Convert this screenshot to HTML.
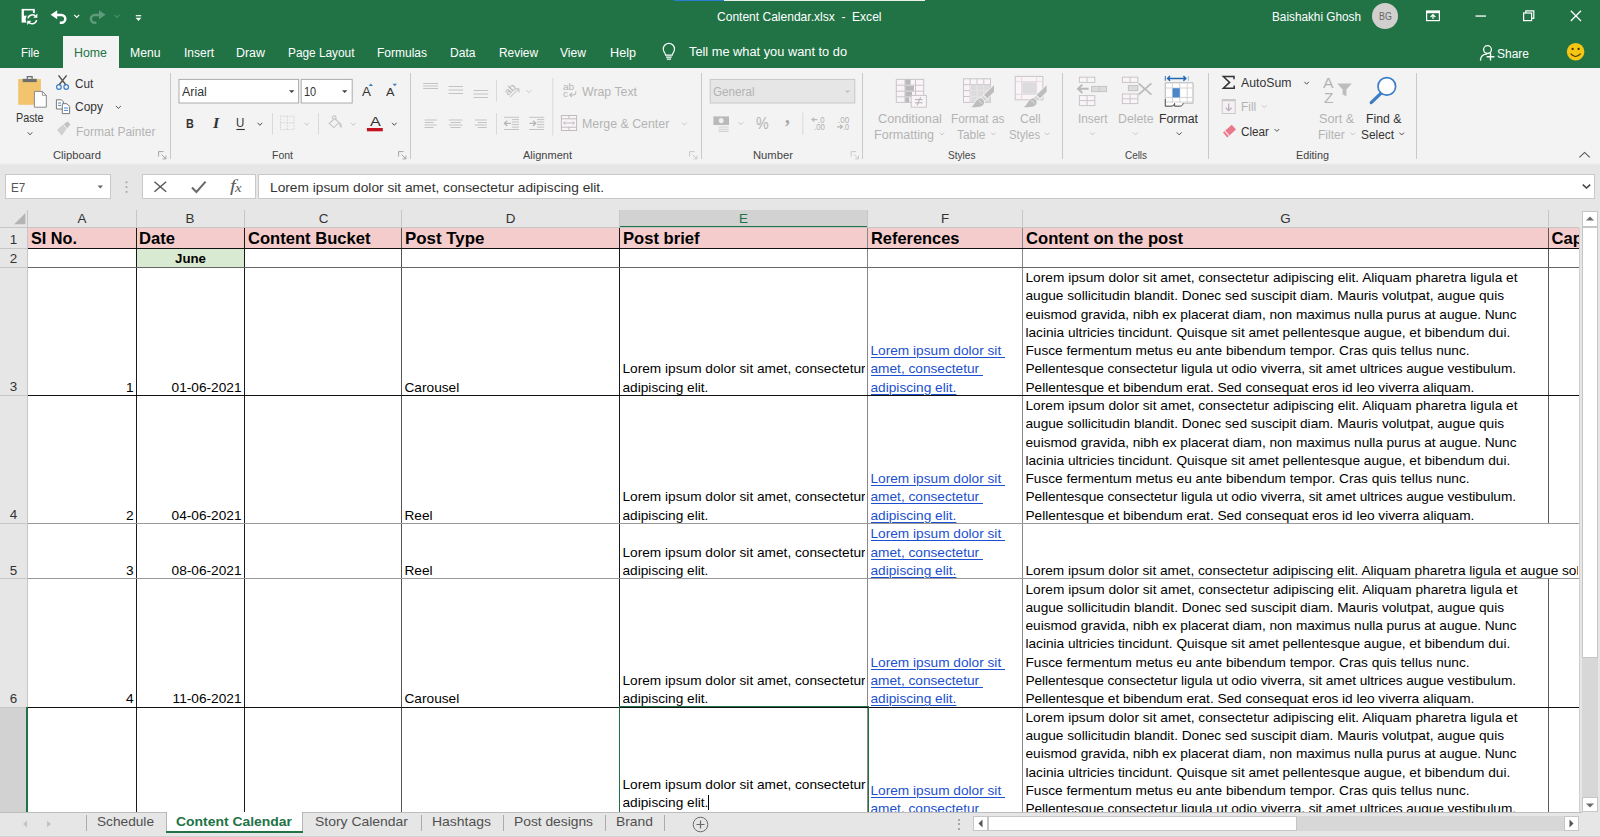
<!DOCTYPE html>
<html lang="en"><head><meta charset="utf-8"><title>Content Calendar.xlsx - Excel</title>
<style>
html,body{margin:0;padding:0}
body{width:1600px;height:837px;overflow:hidden;position:relative;background:#e6e6e6;font-family:'Liberation Sans',sans-serif}
.t{position:absolute;white-space:pre;line-height:1;transform-origin:0 50%;display:block}
.r{position:absolute;box-sizing:border-box}
.c{position:absolute;box-sizing:border-box;font-size:13.68px;line-height:18.25px;color:#000;overflow:hidden;white-space:nowrap}
a{color:#1c50d0;text-decoration:underline;text-underline-offset:2px;text-decoration-thickness:1px}
</style></head>
<body>
<div class="r" style="left:0px;top:0px;width:1600px;height:68px;background:#217346;"></div>
<div class="r" style="left:674px;top:0px;width:50px;height:1px;background:#2b7cd3;"></div>
<div class="r" style="left:724px;top:0px;width:201px;height:1px;background:#e9f1ec;"></div>
<span class="t" style="left:717px;top:11px;font-size:12.8px;color:#fff;font-weight:normal;font-style:normal;transform:scaleX(0.9401);">Content Calendar.xlsx  -  Excel</span>
<span class="t" style="left:1272px;top:11px;font-size:12.5px;color:#fff;font-weight:normal;font-style:normal;transform:scaleX(0.9416);">Baishakhi Ghosh</span>
<div class="r" style="left:1372px;top:3px;width:26px;height:26px;border-radius:50%;background:#d2d0ce"></div>
<span class="t" style="left:1378.7px;top:12px;font-size:10px;color:#666;font-weight:normal;font-style:normal;transform:scaleX(0.8856);">BG</span>
<div class="r" style="left:63px;top:36px;width:56px;height:32px;background:#f3f3f3;"></div>
<span class="t" style="left:21px;top:47px;font-size:12.5px;color:#fff;font-weight:normal;font-style:normal;transform:scaleX(0.9178);">File</span>
<span class="t" style="left:74px;top:47px;font-size:12.5px;color:#217346;font-weight:normal;font-style:normal;transform:scaleX(0.9897);">Home</span>
<span class="t" style="left:130px;top:47px;font-size:12.5px;color:#fff;font-weight:normal;font-style:normal;transform:scaleX(0.975);">Menu</span>
<span class="t" style="left:183.5px;top:47px;font-size:12.5px;color:#fff;font-weight:normal;font-style:normal;transform:scaleX(0.9595);">Insert</span>
<span class="t" style="left:236px;top:47px;font-size:12.5px;color:#fff;font-weight:normal;font-style:normal;transform:scaleX(0.9941);">Draw</span>
<span class="t" style="left:287.5px;top:47px;font-size:12.5px;color:#fff;font-weight:normal;font-style:normal;transform:scaleX(0.9473);">Page Layout</span>
<span class="t" style="left:376.5px;top:47px;font-size:12.5px;color:#fff;font-weight:normal;font-style:normal;transform:scaleX(0.9598);">Formulas</span>
<span class="t" style="left:449.5px;top:47px;font-size:12.5px;color:#fff;font-weight:normal;font-style:normal;transform:scaleX(0.9657);">Data</span>
<span class="t" style="left:498.5px;top:47px;font-size:12.5px;color:#fff;font-weight:normal;font-style:normal;transform:scaleX(0.9512);">Review</span>
<span class="t" style="left:560px;top:47px;font-size:12.5px;color:#fff;font-weight:normal;font-style:normal;transform:scaleX(0.9674);">View</span>
<span class="t" style="left:609.5px;top:47px;font-size:12.5px;color:#fff;font-weight:normal;font-style:normal;transform:scaleX(1.0109);">Help</span>
<span class="t" style="left:689px;top:46px;font-size:12.5px;color:#fff;font-weight:normal;font-style:normal;transform:scaleX(1.0243);">Tell me what you want to do</span>
<span class="t" style="left:1497px;top:48px;font-size:12.5px;color:#fff;font-weight:normal;font-style:normal;transform:scaleX(0.9593);">Share</span>
<div class="r" style="left:0px;top:68px;width:1600px;height:95px;background:#f3f3f3;"></div>
<div class="r" style="left:0px;top:162.7px;width:1600px;height:2px;background:linear-gradient(#f3f3f3,#e6e6e6);"></div>
<div class="r" style="left:170.1px;top:73px;width:1px;height:86px;background:#c9c9c9;"></div>
<div class="r" style="left:410.1px;top:73px;width:1px;height:86px;background:#c9c9c9;"></div>
<div class="r" style="left:701px;top:73px;width:1px;height:86px;background:#c9c9c9;"></div>
<div class="r" style="left:862.3px;top:73px;width:1px;height:86px;background:#c9c9c9;"></div>
<div class="r" style="left:1061.7px;top:73px;width:1px;height:86px;background:#c9c9c9;"></div>
<div class="r" style="left:1208px;top:73px;width:1px;height:86px;background:#c9c9c9;"></div>
<div class="r" style="left:1416.3px;top:73px;width:1px;height:86px;background:#c9c9c9;"></div>
<span class="t" style="left:52.5px;top:150px;font-size:11.5px;color:#444;font-weight:normal;font-style:normal;transform:scaleX(0.9749);">Clipboard</span>
<span class="t" style="left:271.5px;top:150px;font-size:11.5px;color:#444;font-weight:normal;font-style:normal;transform:scaleX(0.9124);">Font</span>
<span class="t" style="left:523px;top:150px;font-size:11.5px;color:#444;font-weight:normal;font-style:normal;transform:scaleX(0.9581);">Alignment</span>
<span class="t" style="left:753px;top:150px;font-size:11.5px;color:#444;font-weight:normal;font-style:normal;transform:scaleX(0.9778);">Number</span>
<span class="t" style="left:948px;top:150px;font-size:11.5px;color:#444;font-weight:normal;font-style:normal;transform:scaleX(0.8778);">Styles</span>
<span class="t" style="left:1124.5px;top:150px;font-size:11.5px;color:#444;font-weight:normal;font-style:normal;transform:scaleX(0.8606);">Cells</span>
<span class="t" style="left:1296px;top:150px;font-size:11.5px;color:#444;font-weight:normal;font-style:normal;transform:scaleX(0.9382);">Editing</span>
<div class="r" style="left:5px;top:174px;width:106px;height:25px;background:#fff;border:1px solid #c9c9c9"></div>
<span class="t" style="left:11.2px;top:182px;font-size:12.8px;color:#555;font-weight:normal;font-style:normal;transform:scaleX(0.9134);">E7</span>
<div class="r" style="left:142px;top:174px;width:114px;height:25px;background:#fff;border:1px solid #c9c9c9"></div>
<div class="r" style="left:258px;top:174px;width:1337px;height:25px;background:#fff;border:1px solid #c9c9c9"></div>
<span class="t" style="left:270px;top:181px;font-size:13px;color:#333;font-weight:normal;font-style:normal;transform:scaleX(1.0553);">Lorem ipsum dolor sit amet, consectetur adipiscing elit.</span>
<div class="r" style="left:27.5px;top:227.5px;width:1551.0px;height:584.5px;background:#fff;"></div>
<div class="r" style="left:27.5px;top:227.5px;width:1551.0px;height:20.5px;background:#f4cccc;"></div>
<div class="r" style="left:136.5px;top:248px;width:108px;height:19px;background:#d9ead3;"></div>
<div class="r" style="left:619.5px;top:209.5px;width:248px;height:18px;background:#d2d2d2;"></div>
<div class="r" style="left:619.5px;top:226px;width:248px;height:1.6px;background:#217346;"></div>
<div class="r" style="left:27.0px;top:209.5px;width:1px;height:18px;background:#c6c6c6;"></div>
<div class="r" style="left:136.0px;top:209.5px;width:1px;height:18px;background:#c6c6c6;"></div>
<div class="r" style="left:244.0px;top:209.5px;width:1px;height:18px;background:#c6c6c6;"></div>
<div class="r" style="left:401.0px;top:209.5px;width:1px;height:18px;background:#c6c6c6;"></div>
<div class="r" style="left:619.0px;top:209.5px;width:1px;height:18px;background:#c6c6c6;"></div>
<div class="r" style="left:867.0px;top:209.5px;width:1px;height:18px;background:#c6c6c6;"></div>
<div class="r" style="left:1022.0px;top:209.5px;width:1px;height:18px;background:#c6c6c6;"></div>
<div class="r" style="left:1548.0px;top:209.5px;width:1px;height:18px;background:#c6c6c6;"></div>
<div class="r" style="left:0px;top:227px;width:1578.5px;height:1px;background:#c6c6c6;"></div>
<span class="t" style="left:82px;top:212px;font-size:13.4px;color:#333;font-weight:normal;font-style:normal;transform:scaleX(1);transform:translateX(-50%);">A</span>
<span class="t" style="left:190px;top:212px;font-size:13.4px;color:#333;font-weight:normal;font-style:normal;transform:scaleX(1);transform:translateX(-50%);">B</span>
<span class="t" style="left:323.5px;top:212px;font-size:13.4px;color:#333;font-weight:normal;font-style:normal;transform:scaleX(1);transform:translateX(-50%);">C</span>
<span class="t" style="left:510.5px;top:212px;font-size:13.4px;color:#333;font-weight:normal;font-style:normal;transform:scaleX(1);transform:translateX(-50%);">D</span>
<span class="t" style="left:743.5px;top:212px;font-size:13.4px;color:#217346;font-weight:normal;font-style:normal;transform:scaleX(1);transform:translateX(-50%);">E</span>
<span class="t" style="left:945px;top:212px;font-size:13.4px;color:#333;font-weight:normal;font-style:normal;transform:scaleX(1);transform:translateX(-50%);">F</span>
<span class="t" style="left:1285.5px;top:212px;font-size:13.4px;color:#333;font-weight:normal;font-style:normal;transform:scaleX(1);transform:translateX(-50%);">G</span>
<svg class="r" style="left:13.6px;top:212.6px;" width="12" height="12" viewBox="0 0 12 12"><path d="M11.4 0 V11.2 H0.2 Z" fill="#b4b4b4"/></svg>
<div class="r" style="left:0px;top:707px;width:27.5px;height:105px;background:#d2d2d2;"></div>
<span class="t" style="left:13.6px;top:233px;font-size:13.4px;color:#333;font-weight:normal;font-style:normal;transform:scaleX(1);transform:translateX(-50%);">1</span>
<span class="t" style="left:13.6px;top:252px;font-size:13.4px;color:#333;font-weight:normal;font-style:normal;transform:scaleX(1);transform:translateX(-50%);">2</span>
<span class="t" style="left:13.6px;top:380px;font-size:13.4px;color:#333;font-weight:normal;font-style:normal;transform:scaleX(1);transform:translateX(-50%);">3</span>
<span class="t" style="left:13.6px;top:508px;font-size:13.4px;color:#333;font-weight:normal;font-style:normal;transform:scaleX(1);transform:translateX(-50%);">4</span>
<span class="t" style="left:13.6px;top:564px;font-size:13.4px;color:#333;font-weight:normal;font-style:normal;transform:scaleX(1);transform:translateX(-50%);">5</span>
<span class="t" style="left:13.6px;top:692px;font-size:13.4px;color:#333;font-weight:normal;font-style:normal;transform:scaleX(1);transform:translateX(-50%);">6</span>
<div class="r" style="left:0px;top:247.5px;width:27.5px;height:1px;background:#c6c6c6;"></div>
<div class="r" style="left:0px;top:266.5px;width:27.5px;height:1px;background:#c6c6c6;"></div>
<div class="r" style="left:0px;top:395.0px;width:27.5px;height:1px;background:#c6c6c6;"></div>
<div class="r" style="left:0px;top:523.0px;width:27.5px;height:1px;background:#c6c6c6;"></div>
<div class="r" style="left:0px;top:578.3px;width:27.5px;height:1px;background:#c6c6c6;"></div>
<div class="r" style="left:0px;top:706.5px;width:27.5px;height:1px;background:#c6c6c6;"></div>
<div class="r" style="left:27px;top:227.5px;width:1px;height:584.5px;background:#c6c6c6;"></div>
<div class="r" style="left:26.4px;top:707px;width:1.6px;height:105px;background:#217346;"></div>
<div class="r" style="left:136.0px;top:227.5px;width:1px;height:584.5px;background:#1a1a1a;"></div>
<div class="r" style="left:244.0px;top:227.5px;width:1px;height:584.5px;background:#1a1a1a;"></div>
<div class="r" style="left:401.0px;top:227.5px;width:1px;height:584.5px;background:#555;"></div>
<div class="r" style="left:619.0px;top:227.5px;width:1px;height:584.5px;background:#1a1a1a;"></div>
<div class="r" style="left:867.0px;top:227.5px;width:1px;height:584.5px;background:#888;"></div>
<div class="r" style="left:1022.0px;top:227.5px;width:1px;height:584.5px;background:#888;"></div>
<div class="r" style="left:1548.0px;top:227.5px;width:1px;height:584.5px;background:#5a5a5a;"></div>
<div class="r" style="left:27.5px;top:247.85px;width:1551.0px;height:1.3px;background:#111;"></div>
<div class="r" style="left:27.5px;top:266.5px;width:1551.0px;height:1px;background:#666;"></div>
<div class="r" style="left:27.5px;top:395.0px;width:1551.0px;height:1px;background:#111;"></div>
<div class="r" style="left:27.5px;top:523.0px;width:1551.0px;height:1px;background:#999;"></div>
<div class="r" style="left:27.5px;top:578.3px;width:1551.0px;height:1px;background:#999;"></div>
<div class="r" style="left:27.5px;top:706.5px;width:1551.0px;height:1px;background:#111;"></div>
<div class="r" style="left:1578.5px;top:227.5px;width:1.5px;height:584.5px;background:#cfcfcf;"></div>
<span class="t" style="left:31px;top:231px;font-size:16.6px;color:#000;font-weight:bold;font-style:normal;transform:scaleX(0.9781);">SI No.</span>
<span class="t" style="left:139px;top:231px;font-size:16.6px;color:#000;font-weight:bold;font-style:normal;transform:scaleX(1.0009);">Date</span>
<span class="t" style="left:247.5px;top:231px;font-size:16.6px;color:#000;font-weight:bold;font-style:normal;transform:scaleX(0.999);">Content Bucket</span>
<span class="t" style="left:404.5px;top:231px;font-size:16.6px;color:#000;font-weight:bold;font-style:normal;transform:scaleX(1.0182);">Post Type</span>
<span class="t" style="left:622.5px;top:231px;font-size:16.6px;color:#000;font-weight:bold;font-style:normal;transform:scaleX(0.9996);">Post brief</span>
<span class="t" style="left:871px;top:231px;font-size:16.6px;color:#000;font-weight:bold;font-style:normal;transform:scaleX(0.989);">References</span>
<span class="t" style="left:1026px;top:231px;font-size:16.6px;color:#000;font-weight:bold;font-style:normal;transform:scaleX(1.0019);">Content on the post</span>
<div class="r" style="left:1549px;top:228px;width:29.5px;height:20px;overflow:hidden"><span class="t" style="left:2.5px;top:3px;font-size:16.6px;font-weight:bold;color:#000">Caption</span></div>
<span class="t" style="left:175px;top:252px;font-size:13.68px;color:#000;font-weight:bold;font-style:normal;transform:scaleX(0.9711);">June</span>
<div class="r" style="left:1547.5px;top:524.4px;width:2px;height:53.8px;background:#fff;"></div>
<div class="c" style="left:30.5px;width:103.0px;bottom:440.20px;text-align:right">1</div>
<div class="c" style="left:139.5px;width:102.0px;bottom:440.20px;text-align:right">01-06-2021</div>
<div class="c" style="left:404.5px;width:212.0px;bottom:440.20px;text-align:left">Carousel</div>
<div class="c" style="left:622.5px;width:242.0px;bottom:440.20px;text-align:left">Lorem ipsum dolor sit amet, consectetur<br>adipiscing elit.</div>
<div class="c" style="left:870.5px;width:149.0px;bottom:440.20px;text-align:left"><a>Lorem ipsum dolor sit&nbsp;</a><br><a>amet, consectetur&nbsp;</a><br><a>adipiscing elit.</a></div>
<div class="c" style="left:1025.5px;width:520.0px;bottom:440.20px;text-align:left"><span style="letter-spacing:0.0133px">Lorem ipsum dolor sit amet, consectetur adipiscing elit. Aliquam pharetra ligula et</span><br><span style="letter-spacing:-0.0125px">augue sollicitudin blandit. Donec sed suscipit diam. Mauris volutpat, augue quis</span><br><span style="letter-spacing:-0.0385px">euismod gravida, nibh ex placerat diam, non maximus nulla purus at augue. Nunc</span><br><span style="letter-spacing:-0.0110px">lacinia ultricies tincidunt. Quisque sit amet pellentesque augue, et bibendum dui.</span><br><span style="letter-spacing:-0.0072px">Fusce fermentum metus eu ante bibendum tempor. Cras quis tellus nunc.</span><br><span style="letter-spacing:-0.0690px">Pellentesque consectetur ligula ut odio viverra, sit amet ultrices augue vestibulum.</span><br><span style="letter-spacing:-0.0370px">Pellentesque et bibendum erat. Sed consequat eros id leo viverra aliquam.</span></div>
<div class="c" style="left:30.5px;width:103.0px;bottom:312.20px;text-align:right">2</div>
<div class="c" style="left:139.5px;width:102.0px;bottom:312.20px;text-align:right">04-06-2021</div>
<div class="c" style="left:404.5px;width:212.0px;bottom:312.20px;text-align:left">Reel</div>
<div class="c" style="left:622.5px;width:242.0px;bottom:312.20px;text-align:left">Lorem ipsum dolor sit amet, consectetur<br>adipiscing elit.</div>
<div class="c" style="left:870.5px;width:149.0px;bottom:312.20px;text-align:left"><a>Lorem ipsum dolor sit&nbsp;</a><br><a>amet, consectetur&nbsp;</a><br><a>adipiscing elit.</a></div>
<div class="c" style="left:1025.5px;width:520.0px;bottom:312.20px;text-align:left"><span style="letter-spacing:0.0133px">Lorem ipsum dolor sit amet, consectetur adipiscing elit. Aliquam pharetra ligula et</span><br><span style="letter-spacing:-0.0125px">augue sollicitudin blandit. Donec sed suscipit diam. Mauris volutpat, augue quis</span><br><span style="letter-spacing:-0.0385px">euismod gravida, nibh ex placerat diam, non maximus nulla purus at augue. Nunc</span><br><span style="letter-spacing:-0.0110px">lacinia ultricies tincidunt. Quisque sit amet pellentesque augue, et bibendum dui.</span><br><span style="letter-spacing:-0.0072px">Fusce fermentum metus eu ante bibendum tempor. Cras quis tellus nunc.</span><br><span style="letter-spacing:-0.0690px">Pellentesque consectetur ligula ut odio viverra, sit amet ultrices augue vestibulum.</span><br><span style="letter-spacing:-0.0370px">Pellentesque et bibendum erat. Sed consequat eros id leo viverra aliquam.</span></div>
<div class="c" style="left:30.5px;width:103.0px;bottom:256.90px;text-align:right">3</div>
<div class="c" style="left:139.5px;width:102.0px;bottom:256.90px;text-align:right">08-06-2021</div>
<div class="c" style="left:404.5px;width:212.0px;bottom:256.90px;text-align:left">Reel</div>
<div class="c" style="left:622.5px;width:242.0px;bottom:256.90px;text-align:left">Lorem ipsum dolor sit amet, consectetur<br>adipiscing elit.</div>
<div class="c" style="left:870.5px;width:149.0px;bottom:256.90px;text-align:left"><a>Lorem ipsum dolor sit&nbsp;</a><br><a>amet, consectetur&nbsp;</a><br><a>adipiscing elit.</a></div>
<div class="c" style="left:1025.5px;width:552.5px;bottom:256.90px;text-align:left">Lorem ipsum dolor sit amet, consectetur adipiscing elit. Aliquam pharetra ligula et augue sollicitudin blandit. Donec sed suscipit diam. Mauris volutpat, augue quis euismod gravida, nibh ex placerat diam.</div>
<div class="c" style="left:30.5px;width:103.0px;bottom:128.70px;text-align:right">4</div>
<div class="c" style="left:139.5px;width:102.0px;bottom:128.70px;text-align:right">11-06-2021</div>
<div class="c" style="left:404.5px;width:212.0px;bottom:128.70px;text-align:left">Carousel</div>
<div class="c" style="left:622.5px;width:242.0px;bottom:128.70px;text-align:left">Lorem ipsum dolor sit amet, consectetur<br>adipiscing elit.</div>
<div class="c" style="left:870.5px;width:149.0px;bottom:128.70px;text-align:left"><a>Lorem ipsum dolor sit&nbsp;</a><br><a>amet, consectetur&nbsp;</a><br><a>adipiscing elit.</a></div>
<div class="c" style="left:1025.5px;width:520.0px;bottom:128.70px;text-align:left"><span style="letter-spacing:0.0133px">Lorem ipsum dolor sit amet, consectetur adipiscing elit. Aliquam pharetra ligula et</span><br><span style="letter-spacing:-0.0125px">augue sollicitudin blandit. Donec sed suscipit diam. Mauris volutpat, augue quis</span><br><span style="letter-spacing:-0.0385px">euismod gravida, nibh ex placerat diam, non maximus nulla purus at augue. Nunc</span><br><span style="letter-spacing:-0.0110px">lacinia ultricies tincidunt. Quisque sit amet pellentesque augue, et bibendum dui.</span><br><span style="letter-spacing:-0.0072px">Fusce fermentum metus eu ante bibendum tempor. Cras quis tellus nunc.</span><br><span style="letter-spacing:-0.0690px">Pellentesque consectetur ligula ut odio viverra, sit amet ultrices augue vestibulum.</span><br><span style="letter-spacing:-0.0370px">Pellentesque et bibendum erat. Sed consequat eros id leo viverra aliquam.</span></div>
<div class="r" style="left:0;top:707px;width:1578.5px;height:105px;overflow:hidden">
<div class="c" style="left:622.5px;top:69.12px;width:244px">Lorem ipsum dolor sit amet, consectetur<br>adipiscing elit.<span style="display:inline-block;width:1px;height:15px;background:#000;vertical-align:-3px"></span></div>
<div class="c" style="left:870.5px;top:75.23px;width:150px"><a>Lorem ipsum dolor sit&nbsp;</a><br><a>amet, consectetur&nbsp;</a><br><a>adipiscing elit.</a></div>
<div class="c" style="left:1025.5px;top:1.83px;width:520px"><span style="letter-spacing:0.0133px">Lorem ipsum dolor sit amet, consectetur adipiscing elit. Aliquam pharetra ligula et</span><br><span style="letter-spacing:-0.0125px">augue sollicitudin blandit. Donec sed suscipit diam. Mauris volutpat, augue quis</span><br><span style="letter-spacing:-0.0385px">euismod gravida, nibh ex placerat diam, non maximus nulla purus at augue. Nunc</span><br><span style="letter-spacing:-0.0110px">lacinia ultricies tincidunt. Quisque sit amet pellentesque augue, et bibendum dui.</span><br><span style="letter-spacing:-0.0072px">Fusce fermentum metus eu ante bibendum tempor. Cras quis tellus nunc.</span><br><span style="letter-spacing:-0.0690px">Pellentesque consectetur ligula ut odio viverra, sit amet ultrices augue vestibulum.</span><br><span style="letter-spacing:-0.0370px">Pellentesque et bibendum erat. Sed consequat eros id leo viverra aliquam.</span></div>
</div>
<div class="r" style="left:619px;top:706.3px;width:249.5px;height:106px;background:transparent;border:1.6px solid #217346;border-bottom:none"></div>
<div class="r" style="left:1582px;top:211px;width:15.5px;height:601px;background:#d7d7d7;"></div>
<div class="r" style="left:1582px;top:211px;width:15.5px;height:15.5px;background:#fff;border:1px solid #c6c6c6"></div>
<div class="r" style="left:1582px;top:226.5px;width:15.5px;height:431px;background:#fff;border:1px solid #c6c6c6"></div>
<div class="r" style="left:1582px;top:797.2px;width:15.5px;height:14.6px;background:#fff;border:1px solid #c6c6c6"></div>
<svg class="r" style="left:1586px;top:216px;" width="8" height="5" viewBox="0 0 8 5"><path d="M0 4.5 L4 0.5 L8 4.5 Z" fill="#6a6a6a"/></svg>
<svg class="r" style="left:1586px;top:802.5px;" width="8" height="5" viewBox="0 0 8 5"><path d="M0 0.5 L4 4.5 L8 0.5 Z" fill="#6a6a6a"/></svg>
<div class="r" style="left:0px;top:812px;width:1600px;height:25px;background:#e6e6e6;"></div>
<div class="r" style="left:0px;top:811.6px;width:1582px;height:1px;background:#bdbdbd;"></div>
<div class="r" style="left:166px;top:812px;width:137px;height:20px;background:#fff;border-left:1px solid #b5b5b5;border-right:1px solid #b5b5b5"></div>
<div class="r" style="left:166px;top:831.2px;width:137px;height:2.2px;background:#217346;"></div>
<span class="t" style="left:97px;top:815px;font-size:13px;color:#505050;font-weight:normal;font-style:normal;transform:scaleX(1.0513);">Schedule</span>
<span class="t" style="left:176px;top:815px;font-size:13px;color:#217346;font-weight:bold;font-style:normal;transform:scaleX(1.0707);">Content Calendar</span>
<span class="t" style="left:315px;top:815px;font-size:13px;color:#505050;font-weight:normal;font-style:normal;transform:scaleX(1.0724);">Story Calendar</span>
<span class="t" style="left:432px;top:815px;font-size:13px;color:#505050;font-weight:normal;font-style:normal;transform:scaleX(1.0743);">Hashtags</span>
<span class="t" style="left:514px;top:815px;font-size:13px;color:#505050;font-weight:normal;font-style:normal;transform:scaleX(1.0613);">Post designs</span>
<span class="t" style="left:616px;top:815px;font-size:13px;color:#505050;font-weight:normal;font-style:normal;transform:scaleX(1.0662);">Brand</span>
<div class="r" style="left:86px;top:815px;width:1px;height:16px;background:#ababab;"></div>
<div class="r" style="left:421px;top:815px;width:1px;height:16px;background:#ababab;"></div>
<div class="r" style="left:503px;top:815px;width:1px;height:16px;background:#ababab;"></div>
<div class="r" style="left:605px;top:815px;width:1px;height:16px;background:#ababab;"></div>
<div class="r" style="left:664.2px;top:815px;width:1px;height:16px;background:#ababab;"></div>
<svg class="r" style="left:692.2px;top:815.8px;" width="17" height="17" viewBox="0 0 17 17"><circle cx="8.5" cy="8.5" r="7.3" fill="none" stroke="#6a6a6a" stroke-width="1"/><path d="M8.5 4.5 V12.5 M4.5 8.5 H12.5" stroke="#6a6a6a" stroke-width="1.2"/></svg>
<svg class="r" style="left:22px;top:820px;" width="6" height="8" viewBox="0 0 6 8"><path d="M5 0.5 L1 4 L5 7.5 Z" fill="#c3c3c3"/></svg>
<svg class="r" style="left:46px;top:820px;" width="6" height="8" viewBox="0 0 6 8"><path d="M1 0.5 L5 4 L1 7.5 Z" fill="#c3c3c3"/></svg>
<div class="r" style="left:958px;top:818.6px;width:2px;height:2px;background:#a8a8a8;"></div>
<div class="r" style="left:958px;top:823.4px;width:2px;height:2px;background:#a8a8a8;"></div>
<div class="r" style="left:958px;top:828px;width:2px;height:2px;background:#a8a8a8;"></div>
<div class="r" style="left:972.5px;top:816.2px;width:606px;height:15px;background:#d7d7d7;"></div>
<div class="r" style="left:972.5px;top:816.2px;width:15.5px;height:15px;background:#fff;border:1px solid #c6c6c6"></div>
<div class="r" style="left:988px;top:816.2px;width:309px;height:15px;background:#fff;border:1px solid #c6c6c6"></div>
<div class="r" style="left:1563.5px;top:816.2px;width:15px;height:15px;background:#fff;border:1px solid #c6c6c6"></div>
<svg class="r" style="left:977.5px;top:819.2px;" width="5" height="9" viewBox="0 0 5 9"><path d="M4.5 0.5 L0.5 4.5 L4.5 8.5 Z" fill="#555"/></svg>
<svg class="r" style="left:1569px;top:819.2px;" width="5" height="9" viewBox="0 0 5 9"><path d="M0.5 0.5 L4.5 4.5 L0.5 8.5 Z" fill="#555"/></svg>
<div class="r" style="left:0px;top:835.6px;width:1600px;height:1.4px;background:#d2d2d2;"></div>
<svg class="r" style="left:0;top:0" width="1600" height="170" viewBox="0 0 1600 170"><rect x="21.6" y="8.9" width="13.2" height="13.7" fill="#fff" stroke="none" stroke-width="1" /><rect x="23.9" y="10.5" width="9" height="5.2" fill="#217346" stroke="none" stroke-width="1" /><circle cx="32.3" cy="19.3" r="6.6" fill="#217346" stroke="none" stroke-width="1"/><path d="M28 18.4 A4.4 4.4 0 0 1 36 16.8" stroke="#fff" stroke-width="1.5" fill="none" /><path d="M36.6 20.2 A4.4 4.4 0 0 1 28.6 21.8" stroke="#fff" stroke-width="1.5" fill="none" /><path d="M37.4 13.6 V17.8 H33.2 Z" stroke="none" stroke-width="0" fill="#fff" /><path d="M27.2 25 V20.8 H31.4 Z" stroke="none" stroke-width="0" fill="#fff" /><path d="M50.6 14.7 L57.2 10.2 V19.2 Z" stroke="none" stroke-width="0" fill="#fff" /><path d="M56 14.9 H61.4 A3.9 3.9 0 0 1 61.4 22.7 H59.8" stroke="#fff" stroke-width="2.5" fill="none" /><path d="M74.2 14.8 L76.7 17.3 L79.2 14.8" stroke="#fff" stroke-width="1.2" fill="none" /><path d="M105.6 14.7 L99 10.2 V19.2 Z" stroke="none" stroke-width="0" fill="#5f9b7b" /><path d="M100.2 14.9 H94.8 A3.9 3.9 0 0 0 94.8 22.7 H96.4" stroke="#5f9b7b" stroke-width="2.5" fill="none" /><path d="M114.5 14.8 L117.0 17.3 L119.5 14.8" stroke="#4f8c6b" stroke-width="1.2" fill="none" /><path d="M135.8 15.7 H141.2" stroke="#fff" stroke-width="1.2" fill="none" /><path d="M135.6 17.8 H141.4 L138.5 20.9 Z" stroke="#fff" stroke-width="0" fill="#fff" /><rect x="1426.6" y="11" width="12.8" height="9.6" fill="none" stroke="#fff" stroke-width="1.2" /><rect x="1426.6" y="11" width="12.8" height="2.2" fill="#fff" stroke="none" stroke-width="1" /><path d="M1433 19 V15 M1430.6 17 L1433 14.6 L1435.4 17" stroke="#fff" stroke-width="1.2" fill="none" /><rect x="1475.5" y="15.4" width="10.5" height="1.3" fill="#fff" stroke="none" stroke-width="1" /><rect x="1523.6" y="13" width="8" height="7.6" fill="none" stroke="#fff" stroke-width="1.2" /><path d="M1525.8 13 V10.8 H1533.8 V18.4 H1531.6" stroke="#fff" stroke-width="1.2" fill="none" /><path d="M1570.8 10.8 L1581 21 M1581 10.8 L1570.8 21" stroke="#fff" stroke-width="1.3" fill="none" /><path d="M665.6 55.2 C665.6 53.4 663.3 52.2 663.3 49 A5.6 5.6 0 0 1 674.5 49 C674.5 52.2 672.2 53.4 672.2 55.2 Z" stroke="#fff" stroke-width="1.2" fill="none" /><path d="M666 57.2 H671.8 M666.8 59.2 H671" stroke="#fff" stroke-width="1.2" fill="none" /><circle cx="1487.5" cy="49.6" r="3.9" fill="none" stroke="#fff" stroke-width="1.3"/><path d="M1480.4 60.6 C1480.6 56 1483.4 54.2 1487 54.2" stroke="#fff" stroke-width="1.3" fill="none" /><path d="M1490.5 52.8 V60.6 M1486.6 56.7 H1494.4" stroke="#fff" stroke-width="1.4" fill="none" /><circle cx="1575.6" cy="51.7" r="8.8" fill="#f7c613" stroke="none" stroke-width="1"/><circle cx="1572.6" cy="49" r="1.15" fill="#3b3400" stroke="none" stroke-width="1"/><circle cx="1578.6" cy="49" r="1.15" fill="#3b3400" stroke="none" stroke-width="1"/><path d="M1570.6 53.6 Q1575.6 59.4 1580.6 53.6" stroke="#3b3400" stroke-width="1.2" fill="none" /><rect x="18.2" y="79" width="22.7" height="25.8" fill="#f2c46e" stroke="none" stroke-width="1" /><rect x="22.7" y="78.8" width="14" height="3.3" fill="#6d6d6d" stroke="none" stroke-width="1" /><path d="M27.3 78.8 V76.6 H32.1 V78.8" stroke="#6d6d6d" stroke-width="1.3" fill="none" /><path d="M34.4 91.4 H42.4 L46.3 95.3 V107.2 H34.4 Z" stroke="#8a8a8a" stroke-width="1" fill="#fff" /><path d="M42.4 91.4 V95.3 H46.3" stroke="#8a8a8a" stroke-width="0.9" fill="none" /><path d="M27.7 132.3 L30.0 134.8 L32.3 132.3" stroke="#505050" stroke-width="1.0" fill="none" /><path d="M58.5 75.4 L66 85 M66.6 75.4 L59 85" stroke="#555" stroke-width="1.5" fill="none" /><circle cx="58.9" cy="87" r="2.3" fill="none" stroke="#3c7dc6" stroke-width="1.2"/><circle cx="66.2" cy="87" r="2.3" fill="none" stroke="#3c7dc6" stroke-width="1.2"/><path d="M56.4 99.8 H61.4 L63.6 102 V109 H56.4 Z" stroke="#777" stroke-width="1" fill="#fff" /><path d="M62.3 103.7 H66.9 L69.6 106.4 V113.6 H62.3 Z" stroke="#777" stroke-width="1" fill="#fff" /><path d="M58 103 H61 M58 105.4 H61 M64 108 H68 M64 110.4 H68" stroke="#4a86c8" stroke-width="1" fill="none" /><path d="M115.9 106 L118.4 108.4 L120.9 106" stroke="#505050" stroke-width="1.0" fill="none" /><path d="M57 129.8 L63.2 124.6 L66.6 128.8 L61.8 135.8 Z" stroke="none" stroke-width="0" fill="#d0d0d0" /><path d="M63.8 124 L67.8 121.6 L70.4 124.6 L67.2 128.2 Z" stroke="none" stroke-width="0" fill="#c2c2c2" /><path d="M158.6 156.6 V151.6 H163.6" stroke="#9a9a9a" stroke-width="0.9" fill="none" /><path d="M161.6 154.6 L165.6 158.6 M165.9 155.6 V158.9 H162.6" stroke="#9a9a9a" stroke-width="0.9" fill="none" /><rect x="179" y="79.4" width="119.6" height="23.6" fill="#fff" stroke="#ababab" stroke-width="1" /><rect x="301.2" y="79.4" width="51" height="23.6" fill="#fff" stroke="#ababab" stroke-width="1" /><path d="M289 90.2 H294.4 L291.7 93 Z" stroke="none" stroke-width="0" fill="#444" /><path d="M342 90.2 H347.4 L344.7 93 Z" stroke="none" stroke-width="0" fill="#444" /><path d="M368.6 86 L370.8 83.6 L373 86 Z" stroke="none" stroke-width="0" fill="#3c7dc6" /><path d="M392.6 83.8 L394.8 86.2 L397 83.8 Z" stroke="none" stroke-width="0" fill="#3c7dc6" /><path d="M236.4 129.5 H244.8" stroke="#333" stroke-width="1.1" fill="none" /><path d="M257.6 122.8 L259.9 125.3 L262.2 122.8" stroke="#505050" stroke-width="1.0" fill="none" /><rect x="272" y="113" width="1" height="21.5" fill="#d9d9d9" stroke="none" stroke-width="1" /><rect x="318" y="113" width="1" height="21.5" fill="#d9d9d9" stroke="none" stroke-width="1" /><rect x="280.5" y="116.2" width="13.6" height="13.4" fill="none" stroke="#d9d0d8" stroke-width="1" stroke-dasharray="1.6 1.2"/><path d="M287.3 116.5 V129.5 M280.6 122.9 H294" stroke="#d9d0d8" stroke-width="1" fill="none" stroke-dasharray="1.6 1.2"/><path d="M304.4 122.8 L306.7 125.3 L309 122.8" stroke="#c8c8c8" stroke-width="1.0" fill="none" /><path d="M334.5 118.5 L329.2 123.6 L333.8 127.6 L339 122.6 Z" stroke="#c4c4c4" stroke-width="1.1" fill="none" /><path d="M332.4 118.8 C332 115.4 335.6 114.6 336 117.6 L336 119.8" stroke="#c4c4c4" stroke-width="1.1" fill="none" /><path d="M339.2 122.4 C341.8 123.6 341.8 126.6 341 127.6 C340 126.4 339.6 124.4 339.2 122.4 Z" stroke="#c4c4c4" stroke-width="0.8" fill="#cfcfcf" /><path d="M351 122.8 L353.3 125.3 L355.6 122.8" stroke="#c8c8c8" stroke-width="1.0" fill="none" /><rect x="366.9" y="128" width="15.9" height="3.3" fill="#c3131f" stroke="none" stroke-width="1" /><path d="M392 122.8 L394.3 125.3 L396.6 122.8" stroke="#505050" stroke-width="1.0" fill="none" /><path d="M398.6 156.6 V151.6 H403.6" stroke="#9a9a9a" stroke-width="0.9" fill="none" /><path d="M401.6 154.6 L405.6 158.6 M405.90000000000003 155.6 V158.9 H402.6" stroke="#9a9a9a" stroke-width="0.9" fill="none" /><path d="M423.2 83.5 H438" stroke="#c3c3c3" stroke-width="1" fill="none" /><path d="M423.2 86 H438" stroke="#c3c3c3" stroke-width="1" fill="none" /><path d="M423.2 88.5 H438" stroke="#c3c3c3" stroke-width="1" fill="none" /><path d="M448.5 86.5 H463" stroke="#c3c3c3" stroke-width="1" fill="none" /><path d="M448.5 90 H463" stroke="#c3c3c3" stroke-width="1" fill="none" /><path d="M448.5 93.5 H463" stroke="#c3c3c3" stroke-width="1" fill="none" /><path d="M473.5 90.5 H488.2" stroke="#c3c3c3" stroke-width="1" fill="none" /><path d="M473.5 94 H488.2" stroke="#c3c3c3" stroke-width="1" fill="none" /><path d="M473.5 97.5 H488.2" stroke="#c3c3c3" stroke-width="1" fill="none" /><rect x="496" y="80" width="1" height="21.5" fill="#d9d9d9" stroke="none" stroke-width="1" /><rect x="496" y="113" width="1" height="21.5" fill="#d9d9d9" stroke="none" stroke-width="1" /><rect x="552.3" y="78" width="1" height="57.5" fill="#d9d9d9" stroke="none" stroke-width="1" /><path d="M510 97.2 L518.8 89 M515.4 88.8 L519 88.8 L519 92.4" stroke="#bdbdbd" stroke-width="1" fill="none" /><path d="M526.4 90.2 L528.7 92.7 L531 90.2" stroke="#c8c8c8" stroke-width="1.0" fill="none" /><path d="M424.6 120 H436.6" stroke="#c3c3c3" stroke-width="1" fill="none" /><path d="M424.6 122.5 H433.6" stroke="#c3c3c3" stroke-width="1" fill="none" /><path d="M424.6 125 H436.6" stroke="#c3c3c3" stroke-width="1" fill="none" /><path d="M424.6 127.5 H433.6" stroke="#c3c3c3" stroke-width="1" fill="none" /><path d="M448.8 120 H462.4" stroke="#c3c3c3" stroke-width="1" fill="none" /><path d="M450.5 122.5 H460.7" stroke="#c3c3c3" stroke-width="1" fill="none" /><path d="M448.8 125 H462.4" stroke="#c3c3c3" stroke-width="1" fill="none" /><path d="M450.5 127.5 H460.7" stroke="#c3c3c3" stroke-width="1" fill="none" /><path d="M474.8 120 H486.8" stroke="#c3c3c3" stroke-width="1" fill="none" /><path d="M477.8 122.5 H486.8" stroke="#c3c3c3" stroke-width="1" fill="none" /><path d="M474.8 125 H486.8" stroke="#c3c3c3" stroke-width="1" fill="none" /><path d="M477.8 127.5 H486.8" stroke="#c3c3c3" stroke-width="1" fill="none" /><path d="M504 117.3 H519 M504 129.5 H519 M511.8 119.6 H519 M511.8 122 H519 M511.8 124.6 H519 M511.8 127.1 H519" stroke="#c3c3c3" stroke-width="1" fill="none" /><path d="M504.4 123.3 H510.8 M507.2 120.6 L504.4 123.3 L507.2 126" stroke="#b4b4b4" stroke-width="1.3" fill="none" /><path d="M529.2 117.3 H544.2 M529.2 129.5 H544.2 M537 119.6 H544.2 M537 122 H544.2 M537 124.6 H544.2 M537 127.1 H544.2" stroke="#c3c3c3" stroke-width="1" fill="none" /><path d="M529.4 123.3 H535.8 M533 120.6 L535.8 123.3 L533 126" stroke="#b4b4b4" stroke-width="1.3" fill="none" /><rect x="561.4" y="115.5" width="15.2" height="15" fill="#faf4f9" stroke="#bdbdbd" stroke-width="1" /><path d="M561.4 118.8 H576.6 M561.4 127.2 H576.6 M569 115.5 V118.8 M569 127.2 V130.5" stroke="#bdbdbd" stroke-width="1" fill="none" /><path d="M563.6 123 H574.4 M565.4 121.4 L563.6 123 L565.4 124.6 M572.6 121.4 L574.4 123 L572.6 124.6" stroke="#bdbdbd" stroke-width="1" fill="none" /><path d="M682 122.6 L684.35 125 L686.7 122.6" stroke="#c8c8c8" stroke-width="1.0" fill="none" /><path d="M689.6 156.6 V151.6 H694.6" stroke="#c4c4c4" stroke-width="0.9" fill="none" /><path d="M692.6 154.6 L696.6 158.6 M696.9 155.6 V158.9 H693.6" stroke="#c4c4c4" stroke-width="0.9" fill="none" /><rect x="710.2" y="79.4" width="144.6" height="23.6" fill="#e6e6e6" stroke="#c8c8c8" stroke-width="1" /><path d="M845 90.6 H850.2 L847.6 93.2 Z" stroke="none" stroke-width="0" fill="#c2c2c2" /><rect x="713.4" y="116.4" width="15.6" height="8.6" fill="#b9b9b9" stroke="none" stroke-width="1" /><ellipse cx="721.2" cy="120.6" rx="2.4" ry="2.6" fill="#f0f0f0"/><path d="M718.6 127 H728.6 M718.6 129.2 H728.6 M718.6 131.4 H728.6" stroke="#cfcfcf" stroke-width="1.1" fill="none" /><path d="M738.6 122.2 L740.9000000000001 124.7 L743.2 122.2" stroke="#c8c8c8" stroke-width="1.0" fill="none" /><rect x="802.4" y="112.6" width="1" height="22" fill="#d9d9d9" stroke="none" stroke-width="1" /><path d="M812 119.6 H817.4 M814.2 117.6 L812 119.6 L814.2 121.6" stroke="#b9b9b9" stroke-width="1.2" fill="none" /><path d="M837 126.8 H842.4 M840.2 124.8 L842.4 126.8 L840.2 128.8" stroke="#b9b9b9" stroke-width="1.2" fill="none" /><path d="M851.2 156.6 V151.6 H856.2" stroke="#c4c4c4" stroke-width="0.9" fill="none" /><path d="M854.2 154.6 L858.2 158.6 M858.5 155.6 V158.9 H855.2" stroke="#c4c4c4" stroke-width="0.9" fill="none" /><rect x="896.3" y="79.4" width="27.4" height="23" fill="#faf4f9" stroke="#c8c6c8" stroke-width="1" /><rect x="905.2" y="79.6" width="5.4" height="5.2" fill="#b9b9b9" stroke="none" stroke-width="1" /><rect x="905.2" y="85.8" width="8.8" height="5" fill="#b9b9b9" stroke="none" stroke-width="1" /><rect x="905.2" y="91.8" width="6.8" height="4.6" fill="#b9b9b9" stroke="none" stroke-width="1" /><rect x="905.2" y="97.4" width="4" height="4.8" fill="#b9b9b9" stroke="none" stroke-width="1" /><path d="M905 79.4 V102.4 M915.5 79.4 V102.4 M896.3 85.2 H923.7 M896.3 91.2 H923.7 M896.3 96.8 H923.7" stroke="#c8c6c8" stroke-width="1" fill="none" /><rect x="911.2" y="95.4" width="15.2" height="11.8" fill="#faf4f9" stroke="#c6c6c6" stroke-width="1" /><path d="M915 99.6 H922.6 M915 102.8 H922.6 M920.6 97.2 L917 105.4" stroke="#b0b0b0" stroke-width="1" fill="none" /><rect x="963.5" y="78.8" width="27" height="23.6" fill="#faf4f9" stroke="#c8c6c8" stroke-width="1" /><path d="M970.2 78.8 V102.4 M977.0 78.8 V102.4 M983.8 78.8 V102.4 M963.5 84.7 H990.5 M963.5 90.6 H990.5 M963.5 96.5 H990.5 " stroke="#c8c6c8" stroke-width="1" fill="none" /><rect x="970.4" y="84.8" width="20" height="17.5" fill="#dcdcdc" stroke="none" stroke-width="1" /><path d="M970.3 84.8 V102.4 M977 84.8 V102.4 M983.8 84.8 V102.4 M970.3 90.6 H990.5 M970.3 96.5 H990.5" stroke="#e9e1e8" stroke-width="1" fill="none" /><path d="M994 85.3 L994 91.7 L987.4 98.3 L984 95.1 Z" stroke="#f3f3f3" stroke-width="1.6" fill="#bdbdbd" paint-order="stroke"/><path d="M983.2 95.89999999999999 L986.6 99.1 L985 100.7 L981.6 97.5 Z" stroke="#f3f3f3" stroke-width="1.2" fill="#cfcfcf" paint-order="stroke"/><path d="M971.4 107.3 C975 104.3 976 98.89999999999999 980.6 98.3 C983.4 98.7 984.6 101.3 983.8 103.69999999999999 C982.4 107.1 977 107.3 971.4 107.3 Z" stroke="#f3f3f3" stroke-width="1.6" fill="#bdbdbd" paint-order="stroke"/><path d="M978.4 100.7 C980 100.89999999999999 981.2 101.9 981.4 103.5" stroke="#e6e6e6" stroke-width="0.9" fill="none" /><rect x="1015.3" y="76.4" width="27.6" height="23.4" fill="#faf4f9" stroke="#c8c6c8" stroke-width="1" /><path d="" stroke="#c8c6c8" stroke-width="1" fill="none" /><path d="M1021.6 76.4 V99.8 M1036.6 76.4 V99.8 M1015.3 81.6 H1042.9 M1015.3 94.4 H1042.9" stroke="#e2dbe1" stroke-width="1" fill="none" /><rect x="1022.2" y="82.2" width="13.8" height="11.6" fill="#dcdcdc" stroke="none" stroke-width="1" /><path d="M1046.6 85.3 L1046.6 91.7 L1040.0 98.3 L1036.6 95.1 Z" stroke="#f3f3f3" stroke-width="1.6" fill="#bdbdbd" paint-order="stroke"/><path d="M1035.8 95.89999999999999 L1039.1999999999998 99.1 L1037.6 100.7 L1034.1999999999998 97.5 Z" stroke="#f3f3f3" stroke-width="1.2" fill="#cfcfcf" paint-order="stroke"/><path d="M1023.9999999999999 107.3 C1027.6 104.3 1028.6 98.89999999999999 1033.1999999999998 98.3 C1036.0 98.7 1037.1999999999998 101.3 1036.3999999999999 103.69999999999999 C1035.0 107.1 1029.6 107.3 1023.9999999999999 107.3 Z" stroke="#f3f3f3" stroke-width="1.6" fill="#bdbdbd" paint-order="stroke"/><path d="M1031.0 100.7 C1032.6 100.89999999999999 1033.8 101.9 1034.0 103.5" stroke="#e6e6e6" stroke-width="0.9" fill="none" /><path d="M939.8 132.6 L942.0 135 L944.2 132.6" stroke="#c8c8c8" stroke-width="1.0" fill="none" /><path d="M991.2 132.6 L993.4000000000001 135 L995.6 132.6" stroke="#c8c8c8" stroke-width="1.0" fill="none" /><path d="M1045 132.6 L1047.2 135 L1049.4 132.6" stroke="#c8c8c8" stroke-width="1.0" fill="none" /><rect x="1079.4" y="77.2" width="15.4" height="5.2" fill="#faf4f9" stroke="#c8c6c8" stroke-width="1" /><path d="M1087.1 77.2 V82.4 " stroke="#c8c6c8" stroke-width="1" fill="none" /><rect x="1091.6" y="86.4" width="15" height="5.2" fill="#dcdcdc" stroke="#c4c4c4" stroke-width="1" /><path d="M1099 86.4 V91.6" stroke="#c4c4c4" stroke-width="1" fill="none" /><path d="M1078 88.8 H1088.6 M1082.4 84.6 L1078 88.8 L1082.4 93" stroke="#b9b9b9" stroke-width="1.9" fill="none" /><rect x="1079.4" y="95.6" width="15.4" height="10" fill="#faf4f9" stroke="#c8c6c8" stroke-width="1" /><path d="M1087.1 95.6 V105.6 M1079.4 100.6 H1094.8000000000002 " stroke="#c8c6c8" stroke-width="1" fill="none" /><path d="M1090.2 132.4 L1092.5 134.9 L1094.8 132.4" stroke="#c8c8c8" stroke-width="1.0" fill="none" /><rect x="1122.4" y="77.2" width="15.4" height="5.2" fill="#faf4f9" stroke="#c8c6c8" stroke-width="1" /><path d="M1130.1 77.2 V82.4 " stroke="#c8c6c8" stroke-width="1" fill="none" /><rect x="1128.4" y="85.6" width="9.4" height="5" fill="#dcdcdc" stroke="#c4c4c4" stroke-width="1" /><rect x="1122.4" y="94" width="15.4" height="9.6" fill="#faf4f9" stroke="#c8c6c8" stroke-width="1" /><path d="M1130.1 94 V103.6 M1122.4 98.8 H1137.8000000000002 " stroke="#c8c6c8" stroke-width="1" fill="none" /><path d="M1138.6 83.4 L1151.4 94.6 M1151.4 83.4 L1138.6 94.6" stroke="#b9b9b9" stroke-width="1.7" fill="none" /><path d="M1133.2 132.4 L1135.5 134.9 L1137.8 132.4" stroke="#c8c8c8" stroke-width="1.0" fill="none" /><path d="M1167.6 78.4 H1185.8 M1170 76 L1167.6 78.4 L1170 80.8 M1183.4 76 L1185.8 78.4 L1183.4 80.8" stroke="#2467b3" stroke-width="1.5" fill="none" /><path d="M1165.3 76 V80.8" stroke="#2f6fb7" stroke-width="1" fill="none" /><path d="M1188.3 76 V80.8" stroke="#9ab8dc" stroke-width="1" fill="none" /><path d="M1165.3 82.8 H1193 V103.2 H1183.2 C1182.6 105.6 1181.4 106.2 1179.4 106.2 H1174.6 V103.4 C1174 105.6 1172.6 106.2 1170.6 106.2 H1165.3 Z" stroke="#b4b4b4" stroke-width="1" fill="#fff" /><path d="M1172.4 82.8 V103 M1179.8 82.8 V103 M1187.2 82.8 V103 M1165.3 88 H1193 M1165.3 97.4 H1193 M1165.3 102 H1193" stroke="#d4d4d4" stroke-width="1" fill="none" /><path d="M1165.3 99 V106.2 H1170.6 C1172.6 106.2 1174 105.6 1174.6 103.4 V106.2 H1179.4 C1181.4 106.2 1182.6 105.6 1183.2 103.2" stroke="#5a5a5a" stroke-width="1" fill="none" /><rect x="1172.6" y="88.2" width="7.2" height="9.2" fill="#4a86c8" stroke="none" stroke-width="1" /><path d="M1176.8 132.4 L1179.1999999999998 134.9 L1181.6 132.4" stroke="#505050" stroke-width="1.0" fill="none" /><path d="M1234 79.2 V76.6 H1223.4 L1229.6 82.4 L1223.4 88.2 H1234.2 V85.6" stroke="#333" stroke-width="1.5" fill="none" stroke-linejoin="miter"/><path d="M1304.4 81.8 L1306.6 84.2 L1308.8 81.8" stroke="#505050" stroke-width="1.0" fill="none" /><rect x="1222.2" y="99.5" width="13" height="14" fill="#f7eff6" stroke="#c9c9c9" stroke-width="1" /><rect x="1222.2" y="99.5" width="13" height="1.8" fill="#c9c9c9" stroke="none" stroke-width="1" /><path d="M1228.7 103.6 V110.6 M1225.8 107.8 L1228.7 110.6 L1231.6 107.8" stroke="#b4b4b4" stroke-width="1.3" fill="none" /><path d="M1262 105.2 L1264.3 107.6 L1266.6 105.2" stroke="#c8c8c8" stroke-width="1.0" fill="none" /><path d="M1223 132.6 L1231.8 124.8 L1236 129.4 L1227.2 137.4 Z" stroke="none" stroke-width="0" fill="#e9788a" /><path d="M1224.9 131 L1229 135.6" stroke="#fbe3e7" stroke-width="1.2" fill="none" /><path d="M1274.6 129 L1276.9 131.4 L1279.2 129" stroke="#505050" stroke-width="1.0" fill="none" /><path d="M1337.2 83.4 H1351.8 L1346.4 89.6 V96.6 L1342.6 94.2 V89.6 Z" stroke="none" stroke-width="0" fill="#bdbdbd" /><path d="M1350.6 132.6 L1352.8 135 L1355 132.6" stroke="#c8c8c8" stroke-width="1.0" fill="none" /><path d="M1380.6 93.6 L1371.2 102.6" stroke="#3c7dc6" stroke-width="3.2" fill="none" stroke-linecap="round"/><circle cx="1386.8" cy="86.4" r="8.8" fill="#fff" stroke="#3c7dc6" stroke-width="1.7"/><path d="M1399.4 132.6 L1401.7 135 L1404 132.6" stroke="#505050" stroke-width="1.0" fill="none" /><path d="M1579.4 157.4 L1584.6 152.4 L1589.8 157.4" stroke="#555" stroke-width="1.1" fill="none" /></svg>
<span class="t" style="left:16.4px;top:112px;font-size:12px;color:#333;font-weight:normal;font-style:normal;transform:scaleX(0.8994);">Paste</span>
<span class="t" style="left:75px;top:78px;font-size:12px;color:#333;font-weight:normal;font-style:normal;transform:scaleX(0.9739);">Cut</span>
<span class="t" style="left:75px;top:101px;font-size:12px;color:#333;font-weight:normal;font-style:normal;transform:scaleX(0.9994);">Copy</span>
<span class="t" style="left:75.5px;top:126px;font-size:12px;color:#b3b3b3;font-weight:normal;font-style:normal;transform:scaleX(1.0018);">Format Painter</span>
<span class="t" style="left:182.2px;top:86px;font-size:12px;color:#333;font-weight:normal;font-style:normal;transform:scaleX(1.0327);">Arial</span>
<span class="t" style="left:304.4px;top:86px;font-size:12px;color:#333;font-weight:normal;font-style:normal;transform:scaleX(0.9132);">10</span>
<span class="t" style="left:361.9px;top:86px;font-size:12.2px;color:#333;font-weight:normal;font-style:normal;transform:scaleX(1.0933);">A</span>
<span class="t" style="left:386px;top:87px;font-size:11.4px;color:#333;font-weight:normal;font-style:normal;transform:scaleX(1.117);">A</span>
<span class="t" style="left:186.4px;top:117px;font-size:13px;color:#333;font-weight:bold;font-style:normal;transform:scaleX(0.8306);">B</span>
<span class="t" style="left:213.4px;top:117px;font-size:13.6px;color:#333;font-weight:bold;font-style:italic;font-family:'Liberation Serif', serif;transform:scaleX(1.1705);">I</span>
<span class="t" style="left:236.4px;top:117px;font-size:12.4px;color:#333;font-weight:normal;font-style:normal;transform:scaleX(0.9271);">U</span>
<span class="t" style="left:369.6px;top:115px;font-size:13.4px;color:#333;font-weight:normal;font-style:normal;transform:scaleX(1.2084);">A</span>
<span class="t" style="left:563px;top:82px;font-size:9.6px;color:#b4b4b4;font-weight:normal;font-style:normal;transform:scaleX(1.0495);">ab</span>
<span class="t" style="left:563px;top:89px;font-size:9.6px;color:#b4b4b4;font-weight:normal;font-style:normal;transform:scaleX(1.0423);">c</span>
<span class="t" style="left:503.5px;top:84px;font-size:10.5px;color:#b4b4b4;transform:rotate(-45deg);transform-origin:50% 50%">ab</span>
<svg class="r" style="left:568px;top:88px" width="10" height="11" viewBox="0 0 10 11"><path d="M7.8 3.4 C8 6 7 7 5 7 H1.8 M3.8 5 L1.8 7 L3.8 9" stroke="#b9b9b9" stroke-width="1.1" fill="none"/></svg>
<span class="t" style="left:581.6px;top:86px;font-size:12px;color:#b3b3b3;font-weight:normal;font-style:normal;transform:scaleX(1.0265);">Wrap Text</span>
<span class="t" style="left:581.6px;top:118px;font-size:12px;color:#b3b3b3;font-weight:normal;font-style:normal;transform:scaleX(1.0307);">Merge &amp; Center</span>
<span class="t" style="left:712.8px;top:86px;font-size:12px;color:#b3b3b3;font-weight:normal;font-style:normal;transform:scaleX(0.9742);">General</span>
<span class="t" style="left:756px;top:115px;font-size:16.5px;color:#b4b4b4;font-weight:normal;font-style:normal;transform:scaleX(0.8656);">%</span>
<span class="t" style="left:784.6px;top:105px;font-size:22px;color:#a9a9a9;font-weight:bold;font-style:normal;font-family:'Liberation Serif', serif;transform:scaleX(0.8727);">,</span>
<span class="t" style="left:818px;top:116px;font-size:8.6px;color:#b0b0b0;font-weight:normal;font-style:normal;transform:scaleX(0.8924);">.0</span>
<span class="t" style="left:813.6px;top:123px;font-size:8.6px;color:#b0b0b0;font-weight:normal;font-style:normal;transform:scaleX(0.9035);">.00</span>
<span class="t" style="left:838.2px;top:116px;font-size:8.6px;color:#b0b0b0;font-weight:normal;font-style:normal;transform:scaleX(0.937);">.00</span>
<span class="t" style="left:843.4px;top:123px;font-size:8.6px;color:#b0b0b0;font-weight:normal;font-style:normal;transform:scaleX(0.8366);">.0</span>
<span class="t" style="left:877.5px;top:113px;font-size:12px;color:#b3b3b3;font-weight:normal;font-style:normal;transform:scaleX(1.0642);">Conditional</span>
<span class="t" style="left:873.5px;top:129px;font-size:12px;color:#b3b3b3;font-weight:normal;font-style:normal;transform:scaleX(1.046);">Formatting</span>
<span class="t" style="left:950.6px;top:113px;font-size:12px;color:#b3b3b3;font-weight:normal;font-style:normal;transform:scaleX(0.9905);">Format as</span>
<span class="t" style="left:956.9px;top:129px;font-size:12px;color:#b3b3b3;font-weight:normal;font-style:normal;transform:scaleX(0.99);">Table</span>
<span class="t" style="left:1019.8px;top:113px;font-size:12px;color:#b3b3b3;font-weight:normal;font-style:normal;transform:scaleX(1.0014);">Cell</span>
<span class="t" style="left:1008.7px;top:129px;font-size:12px;color:#b3b3b3;font-weight:normal;font-style:normal;transform:scaleX(0.9514);">Styles</span>
<span class="t" style="left:1077.7px;top:113px;font-size:12px;color:#b3b3b3;font-weight:normal;font-style:normal;transform:scaleX(0.9828);">Insert</span>
<span class="t" style="left:1118.2px;top:113px;font-size:12px;color:#b3b3b3;font-weight:normal;font-style:normal;transform:scaleX(1.0263);">Delete</span>
<span class="t" style="left:1159.4px;top:113px;font-size:12px;color:#333;font-weight:normal;font-style:normal;transform:scaleX(1.0259);">Format</span>
<span class="t" style="left:1241px;top:77px;font-size:12px;color:#333;font-weight:normal;font-style:normal;transform:scaleX(1.0211);">AutoSum</span>
<span class="t" style="left:1241px;top:101px;font-size:12px;color:#b3b3b3;font-weight:normal;font-style:normal;transform:scaleX(0.9916);">Fill</span>
<span class="t" style="left:1241px;top:126px;font-size:12px;color:#333;font-weight:normal;font-style:normal;transform:scaleX(0.976);">Clear</span>
<span class="t" style="left:1323.4px;top:76px;font-size:14px;color:#b4b4b4;font-weight:normal;font-style:normal;transform:scaleX(1.1344);">A</span>
<span class="t" style="left:1324px;top:91px;font-size:14.6px;color:#b4b4b4;font-weight:normal;font-style:normal;transform:scaleX(1.0536);">Z</span>
<span class="t" style="left:1319.4px;top:113px;font-size:12px;color:#b3b3b3;font-weight:normal;font-style:normal;transform:scaleX(1.0582);">Sort &amp;</span>
<span class="t" style="left:1317.8px;top:129px;font-size:12px;color:#b3b3b3;font-weight:normal;font-style:normal;transform:scaleX(1.0048);">Filter</span>
<span class="t" style="left:1365.5px;top:113px;font-size:12px;color:#333;font-weight:normal;font-style:normal;transform:scaleX(1.0234);">Find &amp;</span>
<span class="t" style="left:1361.1px;top:129px;font-size:12px;color:#333;font-weight:normal;font-style:normal;transform:scaleX(0.9892);">Select</span>
<svg class="r" style="left:0;top:170px" width="1600" height="35" viewBox="0 170 1600 35"><path d="M97.6 185.6 H103 L100.3 188.4 Z" stroke="none" stroke-width="0" fill="#666" /><rect x="125.6" y="181.4" width="1.8" height="1.8" fill="#a6a6a6" stroke="none" stroke-width="1" /><rect x="125.6" y="186.2" width="1.8" height="1.8" fill="#a6a6a6" stroke="none" stroke-width="1" /><rect x="125.6" y="191" width="1.8" height="1.8" fill="#a6a6a6" stroke="none" stroke-width="1" /><path d="M154.4 181.8 L166.2 191.8 M166.2 181.8 L154.4 191.8" stroke="#555" stroke-width="1.4" fill="none" /><path d="M192 187.6 L196.4 192 L205.6 181.6" stroke="#6a6a6a" stroke-width="2.1" fill="none" /><path d="M1582.8 184.6 L1586.5 188 L1590.2 184.6" stroke="#444" stroke-width="1.6" fill="none" /></svg>
<span class="t" style="left:229.6px;top:177px;font-size:17px;color:#5a5a5a;font-weight:normal;font-style:italic;font-family:'Liberation Serif', serif;transform:scaleX(1.2251);">f</span>
<span class="t" style="left:235.2px;top:182px;font-size:12.4px;color:#5a5a5a;font-weight:normal;font-style:italic;font-family:'Liberation Serif', serif;transform:scaleX(1.2);">x</span>
</body></html>
